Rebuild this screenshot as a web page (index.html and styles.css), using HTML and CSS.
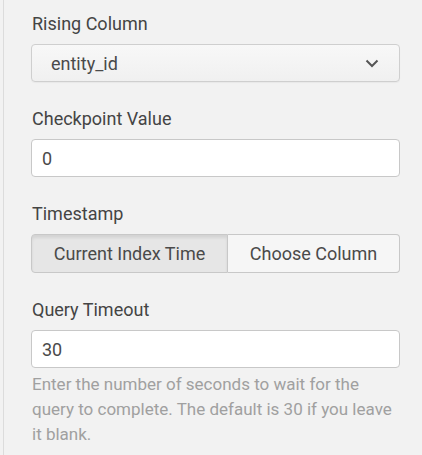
FILE: index.html
```html
<!DOCTYPE html>
<html lang="en">
<head>
    <meta charset="UTF-8">
    <meta name="viewport" content="width=device-width, initial-scale=1.0">
    <title>Rising Column Settings</title>
    <link rel="stylesheet" href="styles.css">
</head>
<body>
    <!-- Settings Panel -->
    <div class="panel">
        <div class="field">
            <label class="field-label">Rising Column</label>
            <div class="select">
                <span class="select-value">entity_id</span>
                <svg class="chevron" width="14" height="9" viewBox="0 0 14 9">
                    <path d="M1.5 1.5 L7 7 L12.5 1.5" fill="none" stroke="#555" stroke-width="2"/>
                </svg>
            </div>
        </div>

        <div class="field">
            <label class="field-label">Checkpoint Value</label>
            <input class="text-input" type="text" value="0">
        </div>

        <div class="field">
            <label class="field-label">Timestamp</label>
            <div class="btn-group">
                <button class="btn active">Current Index Time</button>
                <button class="btn">Choose Column</button>
            </div>
        </div>

        <div class="field">
            <label class="field-label">Query Timeout</label>
            <input class="text-input" type="text" value="30">
            <p class="help">Enter the number of seconds to wait for the query to complete. The default is 30 if you leave it blank.</p>
        </div>
    </div>
</body>
</html>
```

FILE: styles.css
```css
body {
    margin: 0;
    padding: 0;
    background-color: #f2f2f2;
    font-family: Roboto, "Liberation Sans", sans-serif;
    color: #333;
}
.panel {
    margin-left: 3px;
    border-left: 1px solid #dcdcdc;
    padding: 13px 22px 0 27px;
    height: 455px;
    box-sizing: border-box;
}
.field {
    margin-bottom: 26px;
}
.field-label {
    display: block;
    font-size: 18px;
    line-height: 22px;
    margin-bottom: 9px;
    padding-left: 1px;
    color: #444;
}
.select {
    display: flex;
    align-items: center;
    justify-content: space-between;
    height: 38px;
    box-sizing: border-box;
    padding: 0 20px 0 19px;
    border: 1px solid #cfcfcf;
    border-radius: 4px;
    background: linear-gradient(#f8f8f8, #f0f0f0);
    box-shadow: 0 1px 1px rgba(0, 0, 0, 0.04);
}
.select-value {
    font-size: 18px;
    color: #4a4a4a;
}
.text-input {
    display: block;
    width: 100%;
    height: 38px;
    box-sizing: border-box;
    padding: 0 10px;
    border: 1px solid #c8c8c8;
    border-radius: 4px;
    background: #fff;
    font-family: inherit;
    font-size: 18px;
    color: #4a4a4a;
    outline: none;
}
.btn-group {
    display: flex;
    height: 39px;
}
.btn {
    flex: auto;
    padding: 0 19px;
    border: 1px solid #c8c8c8;
    background: #f6f6f6;
    font-family: inherit;
    font-size: 18px;
    color: #4a4a4a;
    cursor: pointer;
}
.btn:first-child {
    border-radius: 4px 0 0 4px;
}
.btn:last-child {
    border-left: none;
    border-radius: 0 4px 4px 0;
}
.btn.active {
    background: #e6e6e6;
    box-shadow: inset 0 3px 3px rgba(0, 0, 0, 0.08);
}
.help {
    margin: 4px 0 0 1px;
    font-size: 17px;
    line-height: 25px;
    color: #a0a0a0;
}
```
